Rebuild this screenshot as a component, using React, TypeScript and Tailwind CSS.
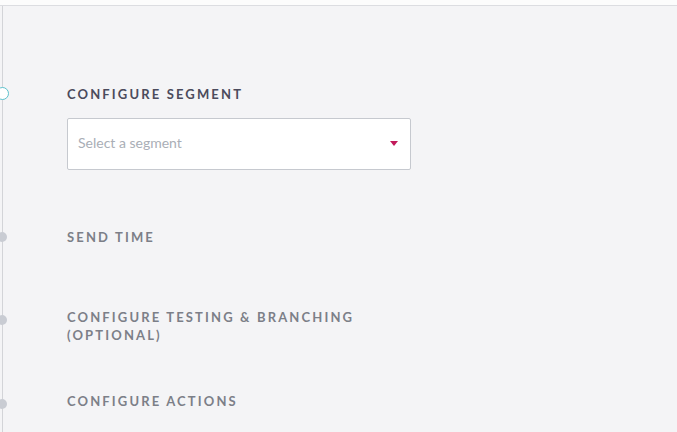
import { type ReactNode } from 'react';

interface StepProps {
  title: ReactNode;
  active?: boolean;
  dotTop?: string;
  className?: string;
  children?: ReactNode;
}

function Step({ title, active = false, dotTop = 'top-[4px]', className = '', children }: StepProps) {
  return (
    <div className={`relative ${className}`}>
      {/* Timeline marker */}
      {active ? (
        <span className="absolute left-[-71px] top-[2px] h-[13px] w-[13px] rounded-full border-[1.5px] border-[#5cc1cc] bg-white" />
      ) : (
        <span className={`absolute left-[-70px] h-[10px] w-[10px] rounded-full bg-[#c9ccd3] ${dotTop}`} />
      )}
      <h3
        className={`max-w-[344px] text-[13px] leading-[18px] font-bold uppercase tracking-[0.165em] ${
          active ? 'text-[#4b4b5c]' : 'text-[#7c7f88]'
        }`}
      >
        {title}
      </h3>
      {children}
    </div>
  );
}

export default function App() {
  return (
    <div
      className="h-[432px] w-full overflow-hidden bg-[#f4f4f6]"
      style={{ fontFamily: 'Lato, "Open Sans", sans-serif' }}
    >
      {/* Top strip */}
      <div className="h-[6px] border-b border-[#dcdde1] bg-[#fcfcfc]" />

      <div className="ml-[2px] h-full border-l border-[#d3d4d8] pl-[64px] pt-[79px]">
        <Step title="Configure Segment" active>
          <div className="mt-[15px] flex h-[52px] w-[344px] items-center justify-between rounded-[2px] border border-[#c6c9cf] bg-white pb-[3px] pl-[10px] pr-[12px]">
            <span className="text-[14px] text-[#a9aeb6]">Select a segment</span>
            <svg width="8" height="5" viewBox="0 0 8 5" className="mt-[1px]">
              <path d="M0 0h8L4 5z" fill="#c21a5a" />
            </svg>
          </div>
        </Step>

        <Step title="Send Time" className="mt-[58px]" />

        <Step title="Configure Testing & Branching (Optional)" dotTop="top-[7px]" className="mt-[62px]" />

        <Step title="Configure Actions" dotTop="top-[7px]" className="mt-[48px]" />
      </div>
    </div>
  );
}
